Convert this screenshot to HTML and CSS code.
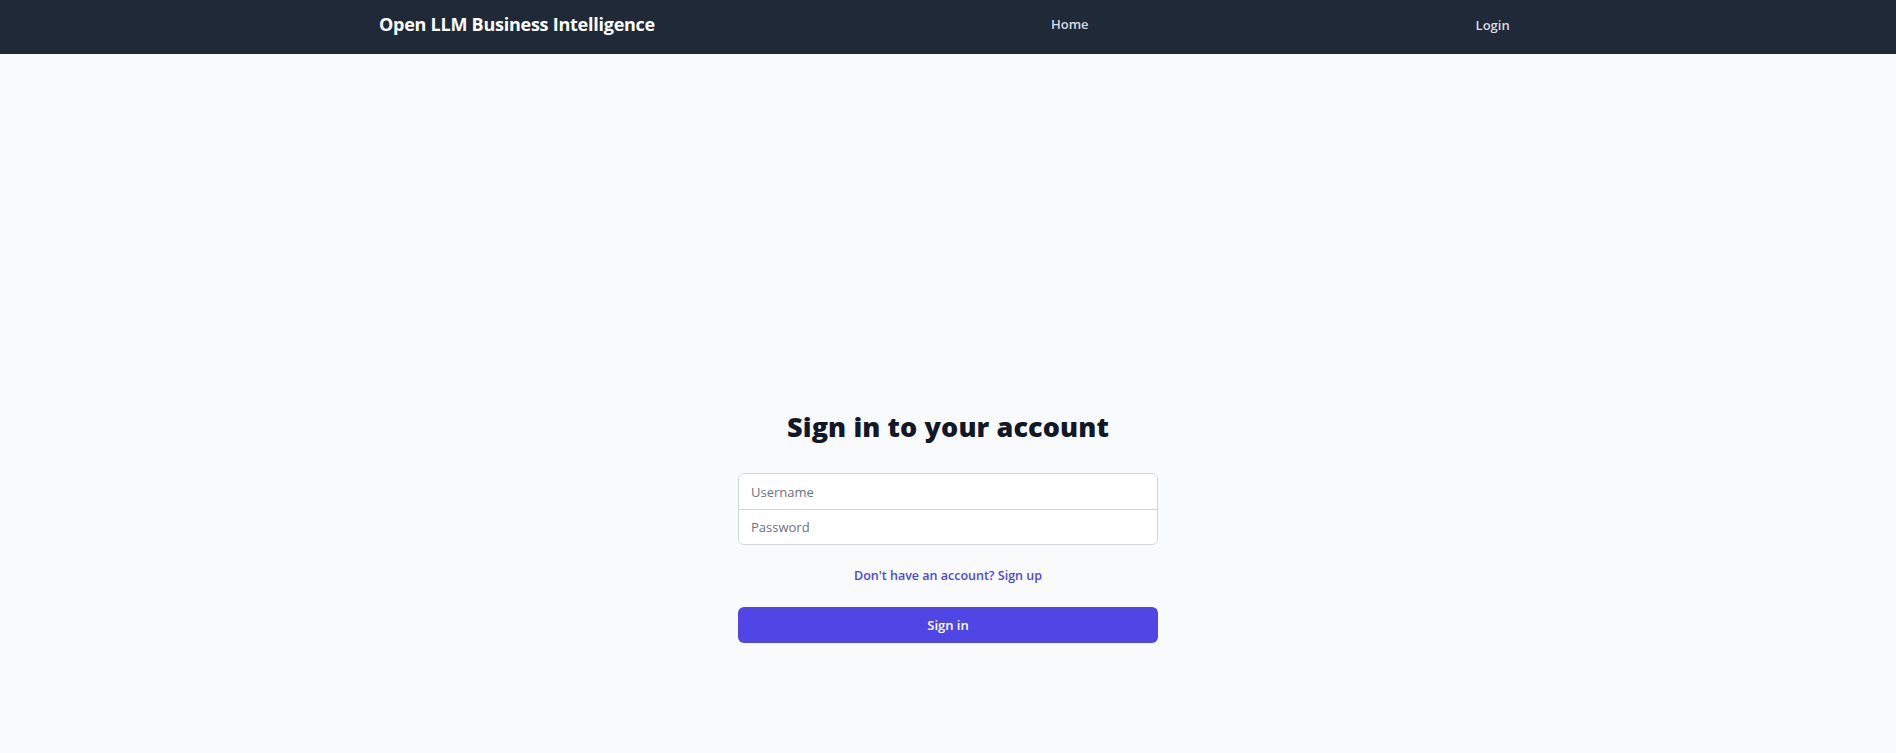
FILE: index.html
```html
<!DOCTYPE html>
<html lang="en">
<head>
<meta charset="utf-8">
<title>Open LLM Business Intelligence</title>
<link rel="stylesheet" href="styles.css">
</head>
<body>
<header class="topbar">
  <div class="topbar-inner">
    <a class="brand" href="#">Open LLM Business Intelligence</a>
    <nav class="nav">
      <a class="nav-home" href="#">Home</a>
      <a class="nav-login" href="#">Login</a>
    </nav>
  </div>
</header>
<main class="main">
  <form class="signin">
    <h2 class="signin-title">Sign in to your account</h2>
    <div class="field-group">
      <input class="field" type="text" placeholder="Username">
      <input class="field" type="password" placeholder="Password">
    </div>
    <p class="signup"><a href="#">Don't have an account? Sign up</a></p>
    <button class="submit" type="button">Sign in</button>
  </form>
</main>
</body>
</html>
```
FILE: styles.css
```css
* { box-sizing: border-box; }
html, body { margin: 0; padding: 0; }
body {
  background: #f9fafb;
  font-family: "Open Sans", "Noto Sans", "Liberation Sans", sans-serif;
  color: #111827;
  min-height: 753px;
}
a { text-decoration: none; }

.topbar {
  background: #1f2937;
  height: 54px;
}
.topbar-inner {
  width: 1138px;
  margin: 0 auto;
  height: 100%;
  display: flex;
  align-items: center;
}
.brand {
  color: #ffffff;
  font-size: 18px;
  font-weight: 700;
  letter-spacing: -0.25px;
  padding-bottom: 6px;
}
.nav {
  display: flex;
  align-items: center;
  flex: 1;
  align-self: stretch;
}
.nav a {
  color: #d8dce3;
  font-size: 13px;
  font-weight: 600;
}
.nav-home { margin-left: 396px; padding-bottom: 6px; }
.nav-login { margin-left: 387px; padding-bottom: 4px; }

.main {
  display: flex;
  justify-content: center;
  padding-top: 354px;
}
.signin {
  width: 420px;
  display: flex;
  flex-direction: column;
}
.signin-title {
  margin: 0 0 27px;
  text-align: center;
  font-size: 27px;
  font-weight: 800;
  line-height: 38px;
  color: #111827;
  letter-spacing: 0.1px;
}
.field-group {
  display: flex;
  flex-direction: column;
  border: 1px solid #d1d5db;
  border-radius: 6px;
  background: #fff;
  overflow: hidden;
}
.field {
  height: 35px;
  border: 0;
  padding: 0 12px;
  font: inherit;
  font-size: 13px;
  color: #111827;
  background: #fff;
  outline: none;
}
.field + .field { border-top: 1px solid #d1d5db; }
.field::placeholder { color: #6b7280; }

.signup {
  margin: 22px 0 0;
  text-align: center;
  font-size: 12.5px;
  line-height: 18px;
}
.signup a { color: #4f46e5; font-weight: 600; }

.submit {
  margin-top: 22px;
  height: 36px;
  border: 0;
  border-radius: 6px;
  background: #4f46e5;
  color: #fff;
  font: inherit;
  font-size: 13px;
  font-weight: 600;
}
```
